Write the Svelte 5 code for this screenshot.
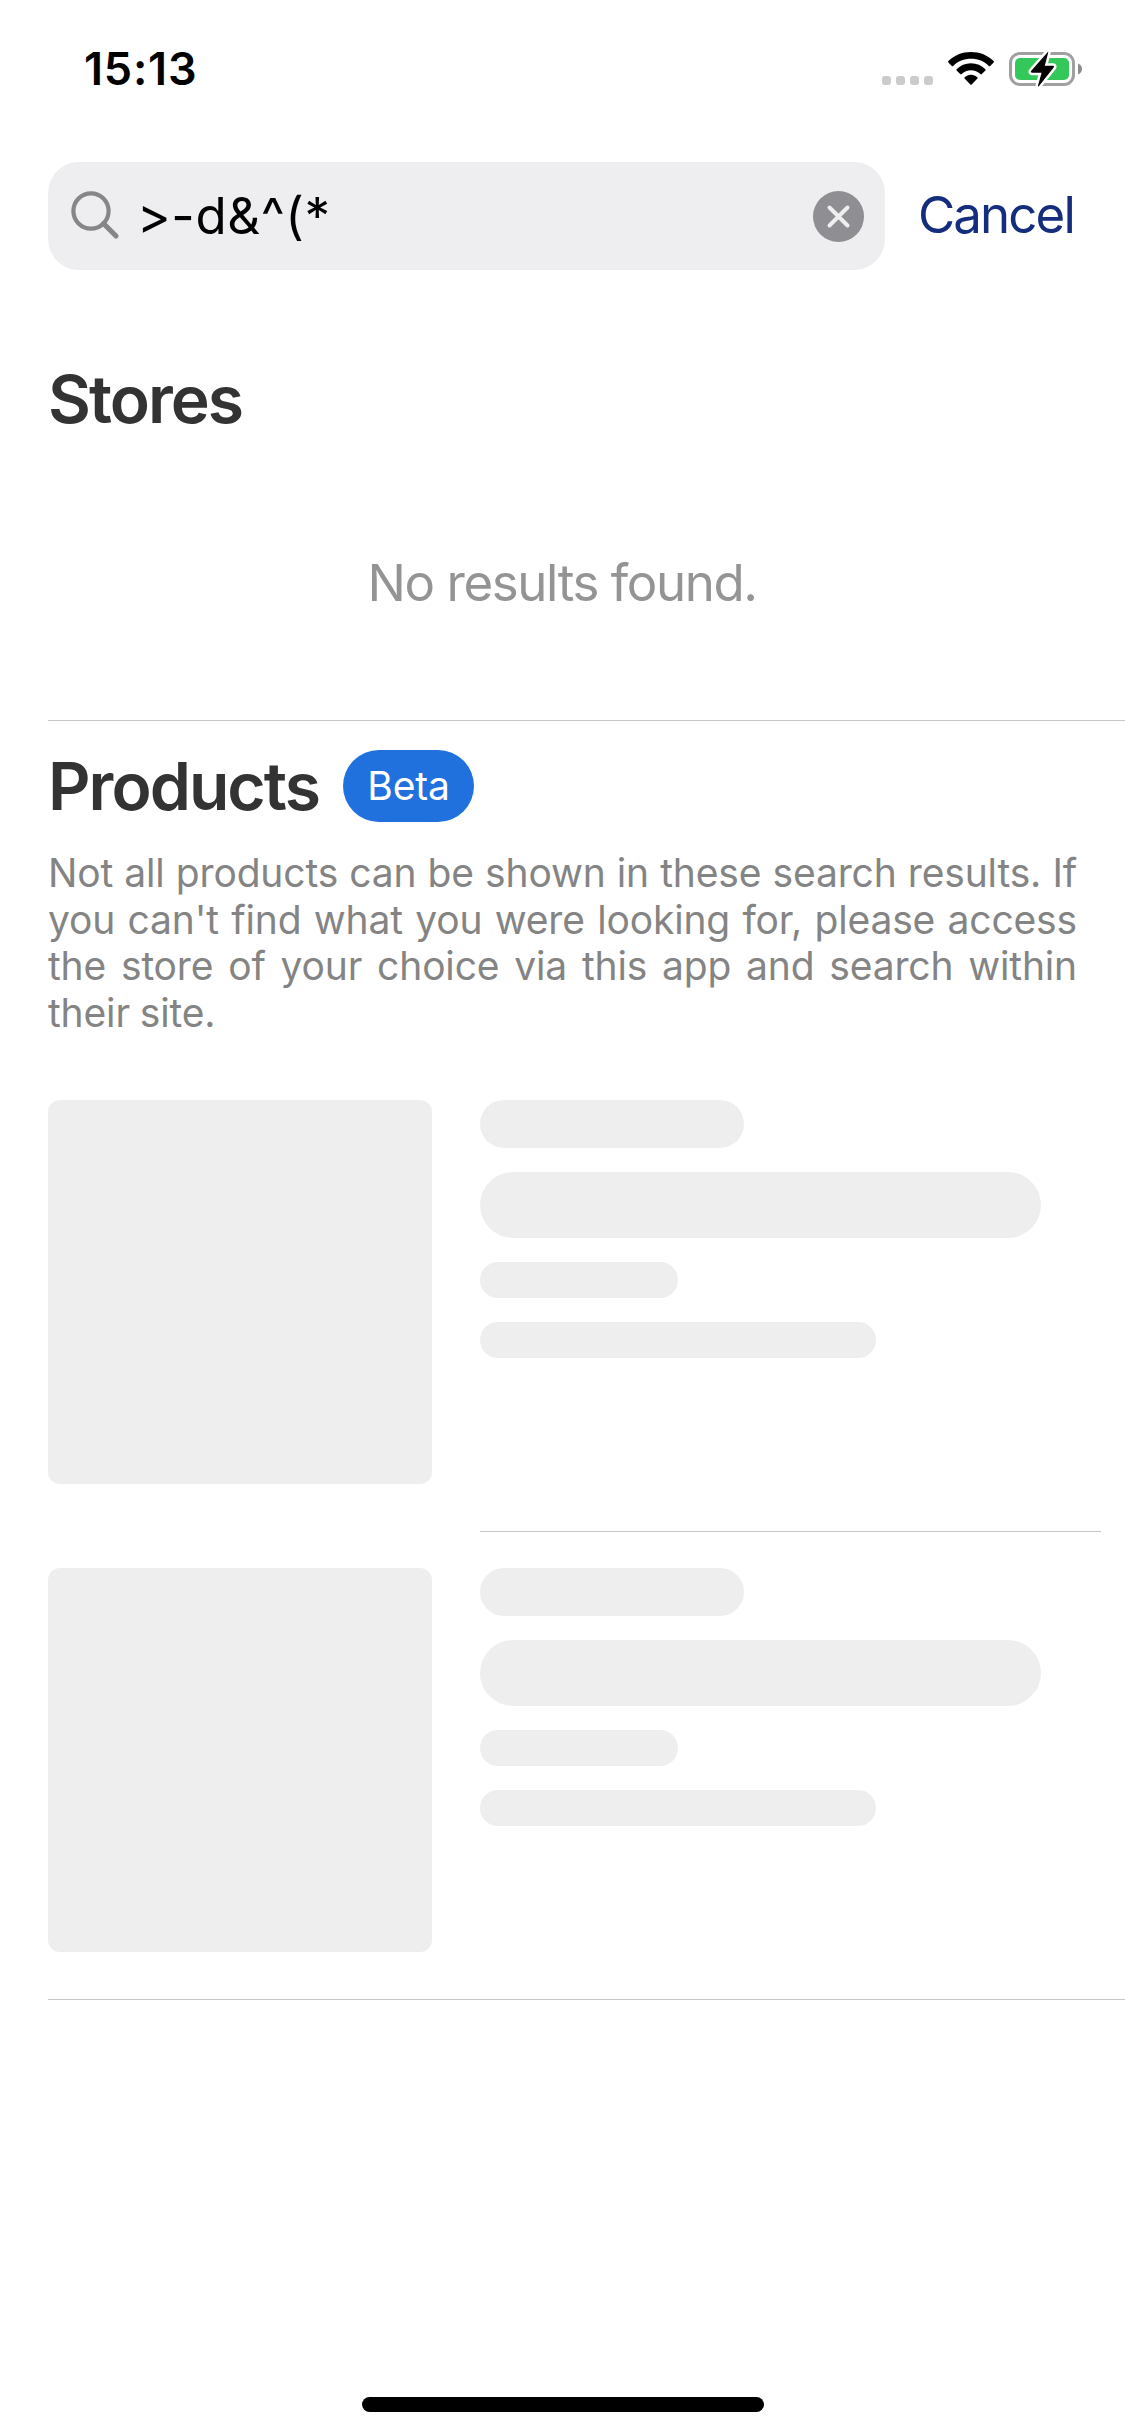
<script>
  const query = '>-d&^(*';
  const placeholders = [0, 1];
</script>

<div class="screen">
  <header class="status">
    <span class="time">15:13</span>
    <div class="indicators">
      <div class="dots"><i></i><i></i><i></i><i></i></div>
      <svg class="wifi" width="46" height="34" viewBox="0 0 46 34">
        <path d="M23 0C31.800 0 39.800 3.300 45.600 9.100Q46.200 9.800 45.600 10.500L42.200 13.900Q41.500 14.500 40.800 13.900C36.100 9.300 29.900 6.800 23 6.800S9.900 9.300 5.200 13.900Q4.500 14.500 3.800 13.900L.4 10.500Q-.2 9.800.4 9.100C6.200 3.300 14.200 0 23 0Z" />
        <path d="M23 11.300C28.600 11.300 33.700 13.500 37.400 17.200Q38 17.900 37.400 18.600L33.800 22.100Q33.100 22.700 32.400 22.100C29.900 19.600 26.600 18.200 23 18.200S16.100 19.600 13.600 22.100Q12.900 22.700 12.200 22.100L8.600 18.600Q8 17.900 8.600 17.200C12.300 13.500 17.400 11.300 23 11.300Z" />
        <path d="M23 22.800C25.500 22.800 27.700 23.700 29.300 25.200Q30 25.900 29.400 26.600L23.700 32.500Q23 33.200 22.300 32.500L16.600 26.600Q16 25.900 16.700 25.200C18.300 23.700 20.500 22.800 23 22.800Z" />
      </svg>
      <svg class="battery" width="74" height="38" viewBox="0 0 74 38">
        <rect x="1.500" y="3.500" width="63" height="31" rx="9.500" fill="none" stroke="#a0a0a3" stroke-width="3" />
        <rect x="6" y="8" width="54" height="22" rx="5" fill="#34c759" />
        <path d="M69 13.500C71.600 14.500 73 16.600 73 19S71.600 23.500 69 24.500Z" fill="#8b8b8e" />
        <path class="bolt" d="M38.600 2.200Q39.600 1.200 39.100 3.100L35.800 15.800H44Q45.800 15.900 44.700 17.600L29.800 36.200Q28.600 37.200 29 35.500L32.600 22.800H23.200Q21 22.500 22.500 20.600Z" />
      </svg>
    </div>
  </header>

  <div class="searchbar">
    <div class="field">
      <svg class="lens" width="49" height="49" viewBox="0 0 49 49">
        <circle cx="20" cy="20" r="17.600" />
        <path d="M32.500 32.500L45 45" />
      </svg>
      <span class="query">{query}</span>
      <svg class="clear" width="51" height="51" viewBox="0 0 51 51">
        <circle cx="25.500" cy="25.500" r="25.500" />
        <path d="M16.500 16.500L34.500 34.500M34.500 16.500L16.500 34.500" />
      </svg>
    </div>
    <span class="cancel">Cancel</span>
  </div>

  <section class="stores">
    <h2>Stores</h2>
    <p class="empty">No results found.</p>
  </section>

  <section class="products">
    <div class="heading">
      <h2>Products</h2>
      <span class="badge">Beta</span>
    </div>
    <p class="note">Not all products can be shown in these search results. If you can't find what you were looking for, please access the store of your choice via this app and search within their site.</p>
    <ul>
      {#each placeholders as id (id)}
        <li>
          <div class="thumb"></div>
          <div class="lines">
            <div class="bar brand"></div>
            <div class="bar title"></div>
            <div class="bar price"></div>
            <div class="bar detail"></div>
          </div>
        </li>
      {/each}
    </ul>
  </section>

  <div class="home"></div>
</div>

<style>
  :global(body) { background: #fff; }
  .screen {
    box-sizing: border-box;
    display: flex;
    flex-direction: column;
    width: 1125px;
    height: 2436px;
    overflow: hidden;
    background: #fff;
    font-family: Inter, "Liberation Sans", sans-serif;
    color: #000;
  }
  h2, p, ul { margin: 0; padding: 0; }
  svg { display: block; flex: none; }
  .status {
    display: flex;
    justify-content: space-between;
    height: 112px;
    padding: 50px 43px 0 84px;
    box-sizing: border-box;
  }
  .time {
    font-size: 45px;
    line-height: 38px;
    font-weight: 600;
    letter-spacing: 0.800px;
  }
  .indicators { display: flex; align-items: flex-start; }
  .dots { display: flex; gap: 5px; margin: 26px 15px 0 0; }
  .dots i { width: 9px; height: 9px; border-radius: 3px; background: #cbcbcb; }
  .wifi { margin: 2px 15px 0 0; }
  .battery { margin-right: -1px; }
  .bolt { fill: #000; stroke: #fff; stroke-width: 5px; paint-order: stroke; stroke-linejoin: round; }
  .searchbar { display: flex; align-items: center; height: 108px; margin-top: 50px; padding-left: 48px; }
  .field {
    display: flex;
    align-items: center;
    box-sizing: border-box;
    width: 837px;
    height: 108px;
    padding: 0 21px 0 23px;
    border-radius: 31px;
    background: #eeeef0;
  }
  .lens { margin-top: -1px; fill: none; stroke: #868689; stroke-width: 4.200px; stroke-linecap: round; }
  .lens path { stroke-width: 5.200px; }
  .query {
    flex: 1;
    padding-left: 17px;
    font-size: 51px;
    line-height: 60px;
    letter-spacing: 0.600px;
    font-feature-settings: "calt" 0;
  }
  .clear { fill: #8e8e93; }
  .clear path { stroke: #eeeef0; stroke-width: 4px; stroke-linecap: round; }
  .cancel { margin-top: -2px; padding-left: 33px; font-size: 51px; line-height: 60px; letter-spacing: -1.900px; color: #142d7c; }
  h2 { font-size: 66px; line-height: 80px; font-weight: 600; letter-spacing: -1.950px; color: #333; }
  .stores {
    height: 451px;
    box-sizing: border-box;
    margin-left: 48px;
    padding-top: 89px;
    border-bottom: 1px solid #c6c6c8;
  }
  .empty { margin: 114px 49px 0 0; text-align: center; font-size: 51px; line-height: 60px; letter-spacing: -1.430px; color: #949494; }
  .products { padding: 29px 0 0 48px; }
  .heading { display: flex; align-items: center; height: 72px; }
  .badge {
    display: flex;
    align-items: center;
    justify-content: center;
    box-sizing: border-box;
    width: 131px;
    height: 72px;
    margin-left: 24px;
    padding-bottom: 2px;
    border-radius: 36px;
    background: #2070de;
    color: #fff;
    font-size: 39px;
    letter-spacing: -0.200px;
  }
  .note {
    width: 1029px;
    margin-top: 28px;
    text-align: justify;
    font-size: 39px;
    line-height: 46.500px;
    letter-spacing: -0.150px;
    word-spacing: -1px;
    color: #848484;
  }
  ul { list-style: none; margin-top: 64px; border-bottom: 1px solid #c6c6c8; }
  li { display: flex; gap: 48px; height: 432px; }
  li + li { margin-top: 36px; }
  li:last-child { height: 431px; }
  .thumb { width: 384px; height: 384px; border-radius: 12px; background: #eee; }
  .lines { display: flex; flex-direction: column; gap: 24px; width: 621px; height: 431px; border-bottom: 1px solid #c6c6c8; }
  li:last-child .lines { border-bottom: 0; }
  .bar { height: 36px; border-radius: 18px; background: #eee; }
  .brand { width: 264px; height: 48px; border-radius: 24px; }
  .title { width: 561px; height: 66px; border-radius: 33px; }
  .price { width: 198px; }
  .detail { width: 396px; }
  .home { width: 402px; height: 15px; margin: auto auto 24px; border-radius: 8px; background: #000; }
</style>
